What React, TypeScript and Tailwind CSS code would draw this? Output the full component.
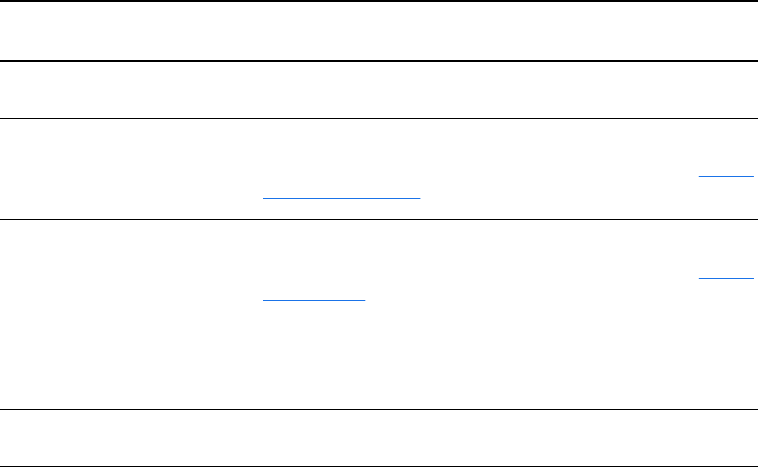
const FONT = 'font-["Liberation_Sans",Arial,sans-serif]'

const limits = ['Default: 30000', 'Minimum: 1000', 'Maximum: 300000', 'Applies to HTTP and gRPC requests']

function DocLink({ children }: { children: React.ReactNode }) {
  return (
    <a
      href="#"
      className="text-transparent underline decoration-[#1a73e8] decoration-1 underline-offset-[2px] [text-decoration-skip-ink:none]"
    >
      {children}
    </a>
  )
}

export default function App() {
  return (
    <div className={`${FONT} min-h-screen bg-white text-[16px] leading-[22px] text-white`}>
      <table className="w-full table-fixed border-separate border-spacing-0 text-left">
        <colgroup>
          <col className="w-[255px]" />
          <col />
        </colgroup>
        <thead>
          <tr>
            <th className="border-y-2 border-black px-2 py-[18px] align-top font-bold">Option</th>
            <th className="border-y-2 border-black pl-2 pr-0 py-[18px] align-top font-bold">Description</th>
          </tr>
        </thead>
        <tbody>
          <tr>
            <td className="border-b border-black px-2 py-[17px] align-top">name</td>
            <td className="border-b border-black pl-2 pr-0 py-[17px] align-top">
              The display name shown for the resource.
            </td>
          </tr>
          <tr>
            <td className="border-b border-black px-2 py-[17px] align-top">access_policy</td>
            <td className="border-b border-black pl-2 pr-0 py-[17px] align-top">
              Defines the access policy applied to each request to this resource. Controls which roles may view,
              create, edit or delete records. <DocLink>See the permissions reference</DocLink>.
            </td>
          </tr>
          <tr>
            <td className="border-b border-black px-2 pt-[18px] pb-[17px] align-top">request_timeout</td>
            <td className="border-b border-black pl-2 pr-0 pt-[18px] pb-[17px] align-top">
              <p>
                Maximum number of milliseconds to wait before a request times out. Set a larger value to override
                the default timeout per request. <DocLink>See the upgrade guide</DocLink>.
              </p>
              <ul>
                {limits.map((item) => (
                  <li key={item}>{item}</li>
                ))}
              </ul>
            </td>
          </tr>
          <tr>
            <td className="border-b border-black px-2 py-[17px] align-top">retries</td>
            <td className="border-b border-black pl-2 pr-0 py-[17px] align-top">
              Number of retry attempts after a failed request.
            </td>
          </tr>
        </tbody>
      </table>
    </div>
  )
}
